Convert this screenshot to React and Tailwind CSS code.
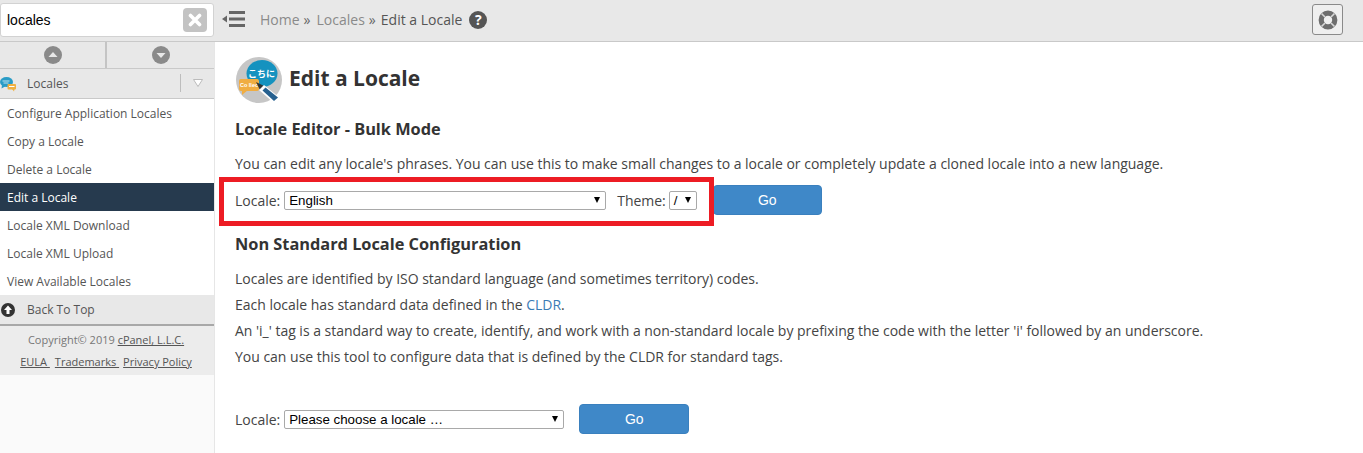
import React from 'react';

const items = [
  'Configure Application Locales',
  'Copy a Locale',
  'Delete a Locale',
  'Edit a Locale',
  'Locale XML Download',
  'Locale XML Upload',
  'View Available Locales',
];

function Caret() {
  return <span className="absolute right-[5px] top-1/2 -translate-y-1/2 w-0 h-0 border-x-[3.5px] border-x-transparent border-t-[6px] border-t-black" />;
}

function FakeSelect({ value, className }) {
  return (
    <div className={`relative h-[19px] rounded-[2px] border border-[#a9a9a9] bg-white pl-[4px] text-[13.33px] leading-[17px] text-black font-['Liberation_Sans',sans-serif] whitespace-nowrap ${className}`}>
      {value}
      <Caret />
    </div>
  );
}

function GoButton({ className }) {
  return (
    <button className={`h-[30px] rounded-[4px] bg-[#3f88c8] border border-[#3a80be] text-white text-[14px] font-['Liberation_Sans',sans-serif] ${className}`}>
      Go
    </button>
  );
}

function ArrowCircle({ up }) {
  return (
    <svg width="18" height="18" viewBox="0 0 18 18">
      <circle cx="9" cy="9" r="9" fill="#8a8a8a" />
      <path d={up ? 'M4.5 11 L9 6 L13.5 11 Z' : 'M4.5 7 L13.5 7 L9 12 Z'} fill="#e8e8e8" />
    </svg>
  );
}

function SmallLocaleIcon() {
  return (
    <svg width="16" height="16" viewBox="0 0 16 16">
      <ellipse cx="6.5" cy="6" rx="6.5" ry="5" fill="#2a9cc6" />
      <path d="M2 9 L1.5 12.5 L6 10 Z" fill="#2a9cc6" />
      <path d="M2.5 5 h7 M3.5 7 h5" stroke="#bfe3f0" strokeWidth="1" />
      <rect x="7.5" y="8" width="8.5" height="5.5" rx="1" fill="#f0b040" />
      <path d="M12 13 L14 15.5 L14.5 13 Z" fill="#f0b040" />
      <rect x="9" y="10" width="5.5" height="1" fill="#fff" />
    </svg>
  );
}

function LocaleIcon() {
  return (
    <svg width="46" height="46" viewBox="0 0 46 46" className="shrink-0">
      <circle cx="23" cy="23" r="23" fill="#c6c6c6" />
      <ellipse cx="26" cy="16.5" rx="15.5" ry="13.5" fill="#1592bf" />
      <path d="M16 27 L13 33 L24 29 Z" fill="#1592bf" />
      <text x="25.5" y="20" textAnchor="middle" fontSize="9" fontWeight="700" fill="#fff" fontFamily="'Noto Sans CJK JP',sans-serif">こちに</text>
      <rect x="3" y="22" width="20" height="12" rx="2" fill="#f0ad42" />
      <path d="M6 33 L6 38 L12 33 Z" fill="#f0ad42" />
      <text x="13" y="30" textAnchor="middle" fontSize="5.5" fontWeight="700" fill="#fff" fontFamily="'Liberation Sans',sans-serif">Co llec</text>
      <path d="M20 25 L28 29 L24 33 Z" fill="#333" />
      <path d="M23 33 L28 28 L44 41 L38 46 Z" fill="#fff" />
      <path d="M26.5 33.5 L29.5 30.5 L42 40.5 L38 44 Z" fill="#26608f" />
    </svg>
  );
}

export default function App() {
  return (
    <div className="w-[1363px] h-[453px] overflow-hidden flex flex-col bg-white font-['Open_Sans',sans-serif] text-[14px] text-[#444]">
      <header className="h-[42px] flex shrink-0 bg-[#e8e8e8] border-b border-[#c9c9c9]">
        <div className="w-[215px] shrink-0 pt-[3px] pr-[1px]">
          <div className="h-[34px] rounded-[3px] border border-[#d2d2d2] bg-white flex items-center justify-between pl-[6px] pr-[6px] text-[14px] text-black font-['Liberation_Sans',sans-serif]">
            <span>locales</span>
            <span className="w-[24px] h-[24px] rounded-[4px] bg-[#c3c3c3] flex items-center justify-center">
              <svg width="14" height="14" viewBox="0 0 14 14">
                <path d="M2.5 2.5 L11.5 11.5 M11.5 2.5 L2.5 11.5" stroke="#fff" strokeWidth="3.6" strokeLinecap="round" />
              </svg>
            </span>
          </div>
        </div>
        <div className="flex-1 flex items-center pl-[7px] pr-[20px]">
          <svg width="24" height="18" viewBox="0 0 24 18" className="mb-[4px]">
            <path d="M7 1 h16 v3 h-16 Z M7 7.5 h16 v3 h-16 Z M7 14 h16 v3 h-16 Z" fill="#666" />
            <path d="M0 9 L5 5.5 V12.5 Z" fill="#666" />
          </svg>
          <nav className="ml-[14px] flex items-center text-[14px] mb-[2px]">
            <span className="text-[#8a8a8a]">Home</span>
            <span className="ml-[4px] text-[#666]">»</span>
            <span className="ml-[6px] text-[#8a8a8a]">Locales</span>
            <span className="ml-[4px] text-[#666]">»</span>
            <span className="ml-[5px] text-[#555]">Edit a Locale</span>
            <span className="ml-[7px] w-[18px] h-[18px] rounded-full bg-[#555] text-white text-[14px] font-bold flex items-center justify-center">?</span>
          </nav>
          <button className="ml-auto mb-[2px] w-[31px] h-[31px] rounded-[3px] border border-[#8a8a8a] bg-[#efefef] flex items-center justify-center">
            <svg width="20" height="20" viewBox="0 0 20 20">
              <circle cx="10" cy="10" r="6.8" fill="none" stroke="#6e6e6e" strokeWidth="5.2" />
              <path d="M3.5 3.5 L7 7 M16.5 3.5 L13 7 M3.5 16.5 L7 13 M16.5 16.5 L13 13" stroke="#d8d8d8" strokeWidth="1.6" />
            </svg>
          </button>
        </div>
      </header>

      <div className="flex-1 flex min-h-0">
        <aside className="w-[215px] shrink-0 bg-[#fafafa] border-r border-[#e6e6e6] text-[12px]">
          <div className="h-[27px] flex bg-[#e8e8e8] border-b border-[#c9c9c9]">
            <div className="w-[107px] flex items-center justify-center border-r-2 border-[#c4c4c4]"><ArrowCircle up /></div>
            <div className="flex-1 flex items-center justify-center"><ArrowCircle /></div>
          </div>
          <div className="h-[30px] flex items-center bg-[#e8e8e8] border-b border-[#c9c9c9] text-[#555]">
            <span className="w-[27px]"><SmallLocaleIcon /></span>
            <span>Locales</span>
            <span className="ml-auto mb-[2px] h-[18px] w-[34px] border-l border-[#bdbdbd] flex items-center justify-center">
              <svg width="10" height="8" viewBox="0 0 10 8"><path d="M0.5 0.5 L9.5 0.5 L5 7.5 Z" fill="#fff" stroke="#bbb" /></svg>
            </span>
          </div>
          <ul>
            {items.map((item) => (
              <li
                key={item}
                className={item === 'Edit a Locale' ? 'h-[28px] leading-[30px] pl-[7px] bg-[#263a4e] text-white' : 'h-[28px] leading-[30px] pl-[7px] bg-white text-[#555]'}
              >
                {item}
              </li>
            ))}
          </ul>
          <div className="h-[31px] flex items-center bg-[#e8e8e8] border-b-2 border-[#a8a8a8] text-[#555]">
            <svg width="14" height="14" viewBox="0 0 14 14" className="ml-[1px]">
              <circle cx="7" cy="7" r="7" fill="#333" />
              <path d="M7 2.5 L11 7 H8.5 V11 H5.5 V7 H3 Z" fill="#fff" />
            </svg>
            <span className="ml-[12px] pt-[1px]">Back To Top</span>
          </div>
          <footer className="h-[49px] bg-[#ececec] text-center text-[11px] leading-[22px] text-[#777] pt-[3px] pr-[2px]">
            <div>Copyright© 2019 <span className="underline text-[#555]">cPanel, L.L.C.</span></div>
            <div className="text-[#555] whitespace-pre">
              <span className="underline">EULA </span>
              <span className="underline ml-[5px]">Trademarks </span>
              <span className="underline ml-[4px]">Privacy Policy</span>
            </div>
          </footer>
        </aside>

        <main className="relative flex-1 pl-[20px] tracking-[-0.014px]">
          <div className="flex items-center pt-[14px] pl-[1px]">
            <LocaleIcon />
            <h1 className="ml-[7px] mb-[4px] text-[21px] leading-[44px] font-bold text-[#333]">Edit a Locale</h1>
          </div>
          <h2 className="mt-[14px] text-[16.35px] leading-[22px] font-bold text-[#333]">Locale Editor - Bulk Mode</h2>
          <p className="mt-[14px] leading-[20px]">You can edit any locale's phrases. You can use this to make small changes to a locale or completely update a cloned locale into a new language.</p>
          <div className="mt-[11px] h-[30px] flex items-center">
            <span>Locale:</span>
            <FakeSelect value="English" className="ml-[4px] w-[322px]" />
            <span className="ml-[11px]">Theme:</span>
            <FakeSelect value="/" className="ml-[3px] w-[28px]" />
            <GoButton className="ml-[16px] w-[109px]" />
          </div>
          <h2 className="mt-[18px] text-[16.35px] leading-[22px] font-bold text-[#333]">Non Standard Locale Configuration</h2>
          <div className="mt-[11px] leading-[26px]">
            <p>Locales are identified by ISO standard language (and sometimes territory) codes.</p>
            <p>Each locale has standard data defined in the <span className="text-[#3a7bb5]">CLDR</span>.</p>
            <p>An 'i_' tag is a standard way to create, identify, and work with a non-standard locale by prefixing the code with the letter 'i' followed by an underscore.</p>
            <p>You can use this tool to configure data that is defined by the CLDR for standard tags.</p>
          </div>
          <div className="mt-[34px] h-[30px] flex items-center">
            <span>Locale:</span>
            <FakeSelect value="Please choose a locale …" className="ml-[4px] w-[280px]" />
            <GoButton className="ml-[15px] w-[110px]" />
          </div>
          <div className="absolute left-[4px] top-[135px] w-[495px] h-[49px] border-[5px] border-[#ed1c24]" />
        </main>
      </div>
    </div>
  );
}
